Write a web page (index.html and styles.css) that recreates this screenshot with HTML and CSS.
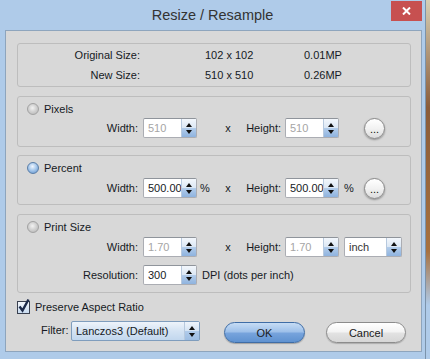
FILE: index.html
```html
<!DOCTYPE html>
<html lang="en">
<head>
    <meta charset="UTF-8">
    <title>Resize / Resample</title>
    <link rel="stylesheet" href="styles.css">
</head>
<body>
    <div class="window">
        <div class="titlebar">
            <span></span>
            <div class="title">Resize / Resample</div>
            <button class="close">
                <svg width="9" height="8" viewBox="0 0 9 8"><path d="M1 0.5 L8 7.5 M8 0.5 L1 7.5" stroke="#fff" stroke-width="2"/></svg>
            </button>
        </div>
        <div class="panel">
            <div class="group info">
                <div class="info-row"><span class="info-lbl">Original Size:</span><span class="info-val">102 x 102</span><span>0.01MP</span></div>
                <div class="info-row"><span class="info-lbl">New Size:</span><span class="info-val">510 x 510</span><span>0.26MP</span></div>
            </div>

            <div class="group pixels">
                <div class="radio-row"><span class="radio"></span>Pixels</div>
                <div class="ctl-row">
                    <span class="lbl">Width:</span>
                    <span class="spinbox off"><span class="val">510</span><span class="spin"><i class="up"></i><i class="down"></i></span></span>
                    <span class="unit"></span>
                    <span class="times">x</span>
                    <span class="lbl2">Height:</span>
                    <span class="spinbox off"><span class="val">510</span><span class="spin"><i class="up"></i><i class="down"></i></span></span>
                    <span class="unit2"></span>
                    <button class="more">...</button>
                </div>
            </div>

            <div class="group percent">
                <div class="radio-row"><span class="radio on"></span>Percent</div>
                <div class="ctl-row">
                    <span class="lbl">Width:</span>
                    <span class="spinbox"><span class="val">500.00</span><span class="spin"><i class="up"></i><i class="down"></i></span></span>
                    <span class="unit">%</span>
                    <span class="times">x</span>
                    <span class="lbl2">Height:</span>
                    <span class="spinbox"><span class="val">500.00</span><span class="spin"><i class="up"></i><i class="down"></i></span></span>
                    <span class="unit2">%</span>
                    <button class="more">...</button>
                </div>
            </div>

            <div class="group print">
                <div class="radio-row"><span class="radio"></span>Print Size</div>
                <div class="ctl-row">
                    <span class="lbl">Width:</span>
                    <span class="spinbox off"><span class="val">1.70</span><span class="spin"><i class="up"></i><i class="down"></i></span></span>
                    <span class="unit"></span>
                    <span class="times">x</span>
                    <span class="lbl2">Height:</span>
                    <span class="spinbox off"><span class="val">1.70</span><span class="spin"><i class="up"></i><i class="down"></i></span></span>
                    <span class="spinbox unit-sel"><span class="val">inch</span><span class="spin"><i class="up"></i><i class="down"></i></span></span>
                </div>
                <div class="ctl-row res-row">
                    <span class="lbl">Resolution:</span>
                    <span class="spinbox"><span class="val">300</span><span class="spin"><i class="up"></i><i class="down"></i></span></span>
                    <span class="dpi">DPI (dots per inch)</span>
                </div>
            </div>

            <div class="check-row">
                <span class="checkbox">
                    <svg width="13" height="16" viewBox="0 0 13 16"><path d="M2.5 8.5 L5.5 12.5 L11.5 1.5" fill="none" stroke="#1c2a4a" stroke-width="2.4"/></svg>
                </span>
                Preserve Aspect Ratio
            </div>

            <div class="filter-row">
                <span class="filter-lbl">Filter:</span>
                <span class="select"><span class="val">Lanczos3 (Default)</span><span class="spin"><i class="up"></i><i class="down"></i></span></span>
                <button class="btn ok">OK</button>
                <button class="btn cancel">Cancel</button>
            </div>
        </div>
    </div>
    <div class="desk"></div>
</body>
</html>
```

FILE: styles.css
```css
* {
    box-sizing: border-box;
}
body {
    margin: 0;
    width: 430px;
    height: 359px;
    overflow: hidden;
    display: flex;
    font-family: "Liberation Sans", Arial, sans-serif;
    font-size: 11px;
    color: #161a24;
    background: #afcbe9;
}
.window {
    width: 426px;
    height: 359px;
    background: #afcbe9;
    border-right: 1px solid #7b93ab;
}
.desk {
    flex: 1;
    background: linear-gradient(#d6cfb4, #8a5c3a 30%, #a7713f 70%, #afcbe9 85%);
}
.titlebar {
    display: grid;
    grid-template-columns: 1fr auto 1fr;
    height: 30px;
}
.title {
    font-size: 14.5px;
    line-height: 30px;
    color: #333;
}
.close {
    justify-self: end;
    align-self: start;
    margin: 1px 3px 0 0;
    width: 31px;
    height: 20px;
    padding: 0;
    border: 0;
    background: #c75050;
    display: flex;
    align-items: center;
    justify-content: center;
}
.panel {
    margin-left: 5px;
    width: 417px;
    height: 322px;
    border: 1px solid #8ea5bd;
    background: #d8d8d8;
    padding: 12px 10px 0 11px;
}
.group {
    border: 1px solid #bdbdbd;
    border-radius: 3px;
}
.info {
    height: 44px;
    padding-top: 1px;
}
.pixels {
    height: 51px;
    margin-top: 9px;
}
.percent {
    height: 50px;
    margin-top: 8px;
}
.print {
    height: 79px;
    margin-top: 9px;
}
.info-row {
    display: grid;
    grid-template-columns: 122px 164px 1fr;
    line-height: 20px;
}
.info-lbl {
    text-align: right;
}
.info-val {
    padding-left: 65px;
}
.radio-row {
    display: flex;
    align-items: center;
    gap: 5px;
    height: 16px;
    margin-top: 4px;
    padding-left: 9px;
}
.radio {
    width: 12px;
    height: 12px;
    border-radius: 50%;
    border: 1px solid #a2a2a2;
    background: radial-gradient(circle at 45% 40%, #f2f2f2 0, #d2d2d2 45%, #b2b2b2 100%);
}
.radio.on {
    border-color: #5a7ea8;
    background: radial-gradient(circle at 45% 35%, #f0f6fd 0, #a9c9ec 45%, #5a8fca 100%);
}
.ctl-row {
    display: flex;
    align-items: center;
    height: 20px;
    margin-top: 2px;
}
.pixels .ctl-row {
    margin-top: 1px;
}
.ctl-row.res-row {
    margin-top: 8px;
}
.lbl {
    width: 120px;
    text-align: right;
    margin-right: 5px;
}
.lbl2 {
    width: 50px;
    text-align: right;
    margin-right: 4px;
}
.unit {
    width: 28px;
    padding-left: 3px;
}
.times {
    width: 6px;
    text-align: center;
}
.unit2 {
    width: 25px;
    padding-left: 5px;
}
.dpi {
    margin-left: 5px;
}
.spinbox {
    display: flex;
    width: 54px;
    height: 20px;
    border: 1px solid #abadb3;
    border-top-color: #8f949b;
    border-radius: 2px;
    background: #fff;
}
.spinbox .val,
.select .val {
    flex: 1;
    padding-left: 4px;
    line-height: 18px;
    white-space: nowrap;
    overflow: hidden;
}
.spinbox.off .val {
    color: #a5a5a5;
}
.unit-sel {
    width: 58px;
    margin-left: 5px;
}
.unit-sel .val {
    color: #333;
}
.spin {
    width: 15px;
    display: flex;
    flex-direction: column;
    border-left: 1px solid #b7c9de;
    background: linear-gradient(#f3f7fc, #dbe7f4 50%, #b3cdeb 50%, #8fb3de);
}
.spin i {
    flex: 1;
    display: flex;
    align-items: center;
    justify-content: center;
}
.spin i::after {
    content: "";
    border-left: 3px solid transparent;
    border-right: 3px solid transparent;
}
.spin .up::after {
    border-bottom: 4px solid #111;
    margin-top: 2px;
}
.spin .down::after {
    border-top: 4px solid #111;
    margin-bottom: 2px;
}
.more {
    width: 21px;
    height: 21px;
    padding: 0 0 3px;
    border-radius: 50%;
    border: 1px solid #8a8a8a;
    background: linear-gradient(#ffffff, #f2f2f2 50%, #dcdcdc);
    box-shadow: 0 1px 2px rgba(0, 0, 0, 0.35);
    font-family: inherit;
    font-size: 11px;
    color: #111;
    display: flex;
    align-items: flex-end;
    justify-content: center;
    line-height: 11px;
}
.check-row {
    display: flex;
    align-items: center;
    gap: 5px;
    height: 16px;
    margin-top: 6px;
}
.checkbox {
    position: relative;
    width: 13px;
    height: 13px;
    border: 1px solid #3a4150;
    background: linear-gradient(#f3f7fc, #c8dbf0);
}
.checkbox svg {
    position: absolute;
    left: -1px;
    top: -4px;
}
.filter-row {
    display: flex;
    align-items: flex-start;
    height: 21px;
    margin-top: 6px;
    padding-left: 24px;
}
.filter-lbl {
    width: 30px;
    line-height: 19px;
}
.select {
    display: flex;
    width: 129px;
    height: 20px;
    border: 1px solid #7f9dbd;
    border-radius: 2px;
    background: linear-gradient(#eef4fb, #d4e3f3 50%, #c2d7ee);
}
.select .spin {
    background: linear-gradient(#eef4fb, #d4e3f3 50%, #b0cbea 50%, #9dbde2);
}
.btn {
    height: 21px;
    margin-top: 1px;
    border-radius: 11px;
    font-family: inherit;
    font-size: 11px;
    color: #1a1a1a;
    padding: 0;
}
.ok {
    width: 81px;
    margin-left: 24px;
    border: 1px solid #3f6da6;
    background: linear-gradient(#c6dcf4, #9fc1ea 45%, #76a3dc 55%, #5f92d0);
    box-shadow: 0 1px 1px rgba(0, 0, 0, 0.25);
}
.cancel {
    width: 80px;
    margin-left: 21px;
    border: 1px solid #8c8c8c;
    background: linear-gradient(#ffffff, #f4f4f4 45%, #e2e2e2 55%, #d6d6d6);
    box-shadow: 0 1px 1px rgba(0, 0, 0, 0.2);
}
```
